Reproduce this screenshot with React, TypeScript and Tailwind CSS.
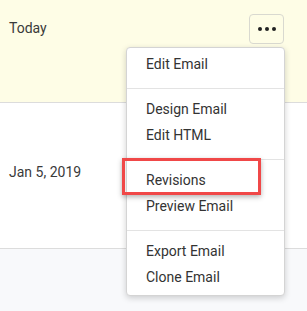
import React from "react";

const sections = [
  ["Edit Email"],
  ["Design Email", "Edit HTML"],
  ["Revisions", "Preview Email"],
  ["Export Email", "Clone Email"],
];

export default function App() {
  return (
    <div
      className="relative w-[307px] h-[311px] overflow-hidden bg-[#f8f9fb] text-[14px] text-[#3a3a3a]"
      style={{ fontFamily: "Roboto, 'Liberation Sans', sans-serif" }}
    >
      <div className="h-[103px] bg-[#fefde6] border-b border-[#dcdcdc] flex justify-between pl-[9px] pr-[23px] pt-[18px]">
        <div className="leading-[20px]">Today</div>
        <button className="mt-[-4px] w-[35px] h-[30px] rounded-[4px] border border-[#d9d9d0] bg-[#fefde6] flex items-center justify-center gap-[3px]">
          <span className="w-[4px] h-[4px] rounded-full bg-[#222]" />
          <span className="w-[4px] h-[4px] rounded-full bg-[#222]" />
          <span className="w-[4px] h-[4px] rounded-full bg-[#222]" />
        </button>
      </div>
      <div className="h-[146px] bg-white border-b border-[#dcdcdc] flex items-center pl-[9px] pb-[6px]">
        <div>Jan 5, 2019</div>
      </div>

      <div className="absolute left-[126px] top-[47px] w-[159px] h-[249px] bg-white rounded-[4px] border border-[#d4d4d4] shadow-[0_2px_6px_rgba(0,0,0,0.18)] pt-[3px] pb-[6px]">
        {sections.map((items, i) => (
          <div key={i}>
            {i > 0 && <div className="mt-[11px] mb-[7px] h-px bg-[#e3e3e3]" />}
            {items.map((t) => (
              <div key={t} className="h-[26px] flex items-center pl-[19px] text-[#333]">
                {t}
              </div>
            ))}
          </div>
        ))}
      </div>

      <div className="absolute left-[122px] top-[158px] w-[139px] h-[37px] border-[3px] border-[#f04848] shadow-[0_2px_5px_rgba(0,0,0,0.3)]" />
    </div>
  );
}
